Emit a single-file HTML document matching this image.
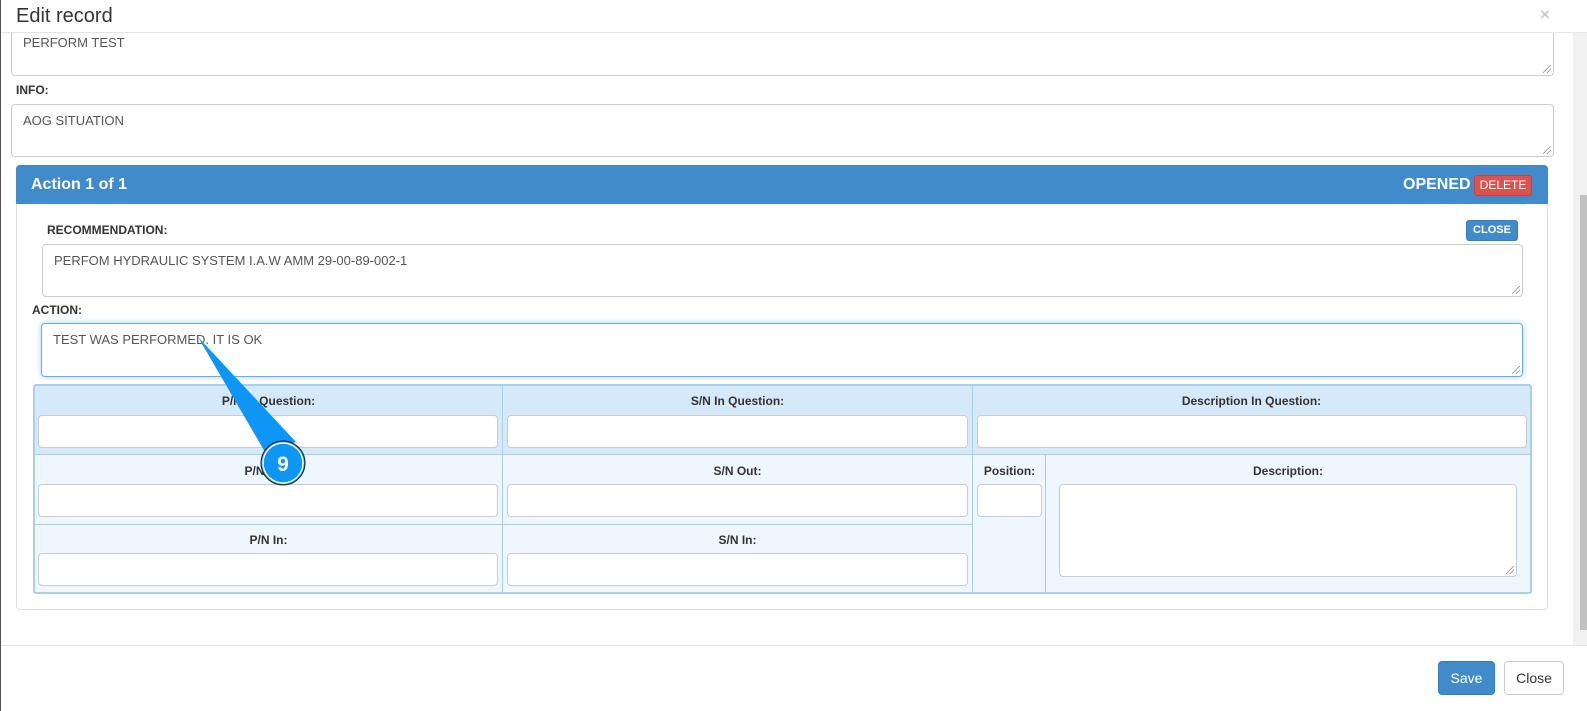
<!DOCTYPE html>
<html><head><meta charset="utf-8"><style>
*{box-sizing:border-box;margin:0;padding:0}
body{width:1587px;height:711px;background:#fff;font-family:"Liberation Sans",Arial,sans-serif;position:relative;overflow:hidden;color:#333}
.a{position:absolute}
.ta{position:absolute;border:1px solid #ccc;border-radius:4px;background:#fff;font-size:13px;color:#555;padding:8px 11px}
.lbl{position:absolute;font-size:12px;font-weight:bold;color:#333}
.in{position:absolute;border:1px solid #ccc;border-radius:4px;background:#fff;height:33px}
.th{position:absolute;font-size:12px;font-weight:bold;color:#333;text-align:center}
.grip{position:absolute;right:2px;bottom:2px;width:8px;height:8px;background:linear-gradient(135deg,transparent 45%,#888 45%,#888 52%,transparent 52%,transparent 70%,#888 70%,#888 77%,transparent 77%)}
</style></head><body>
<div class="a" style="left:0;top:0;width:1px;height:711px;background:#555"></div>
<div class="a" style="left:1573px;top:33px;width:14px;height:612px;background:#f1f1f1"></div>
<div class="a" style="left:1580px;top:195px;width:7px;height:435px;background:#c1c1c1"></div>

<div class="ta" style="left:11px;top:22px;width:1543px;height:54px;padding-top:12px">PERFORM TEST<div class="grip"></div></div>
<div class="a" style="left:1px;top:0;width:1586px;height:33px;background:#fff;border-bottom:1px solid #e5e5e5"></div>
<div class="a" style="left:16px;top:5px;font-size:20px;color:#333">Edit record</div>
<div class="a" style="left:1540px;top:5px;font-size:17px;font-weight:bold;color:#ccc">×</div>

<div class="lbl" style="left:16px;top:83px">INFO:</div>
<div class="ta" style="left:11px;top:104px;width:1543px;height:53px">AOG SITUATION<div class="grip"></div></div>

<div class="a" style="left:16px;top:165px;width:1532px;height:445px;border:1px solid #ddd;border-radius:4px"></div>
<div class="a" style="left:16px;top:165px;width:1532px;height:39px;background:#428bca;border-radius:4px 4px 0 0"></div>
<div class="a" style="left:31px;top:176px;font-size:16px;font-weight:bold;color:#fff">Action 1 of 1</div>
<div class="a" style="left:1403px;top:176px;font-size:16px;font-weight:bold;color:#fff">OPENED</div>
<div class="a" style="left:1474px;top:175px;width:58px;height:21px;background:#d9534f;border:1px solid #d43f3a;border-radius:3px;color:#fff;font-size:12px;text-align:center;line-height:19px">DELETE</div>

<div class="lbl" style="left:47px;top:223px">RECOMMENDATION:</div>
<div class="a" style="left:1466px;top:220px;width:52px;height:21px;background:#428bca;border:1px solid #357ebd;border-radius:3px;color:#fff;font-size:11px;font-weight:bold;text-align:center;line-height:19px">CLOSE</div>
<div class="ta" style="left:42px;top:244px;width:1481px;height:53px">PERFOM HYDRAULIC SYSTEM I.A.W AMM 29-00-89-002-1<div class="grip"></div></div>

<div class="lbl" style="left:32px;top:303px">ACTION:</div>
<div class="ta" style="left:41px;top:323px;width:1482px;height:54px;border-color:#66afe9;box-shadow:0 0 6px rgba(102,175,233,.6)">TEST WAS PERFORMED. IT IS OK<div class="grip"></div></div>

<div class="a" style="left:33px;top:384px;width:1499px;height:210px;border:2px solid #a9cfee;border-radius:3px;background:#eef6fe;overflow:hidden">
 <div class="a" style="left:0;top:0;width:1497px;height:69px;background:#d6e9f8;border-bottom:1px solid #a9cfee"></div>
 <div class="a" style="left:0;top:138px;width:938px;height:1px;background:#a9cfee"></div>
 <div class="a" style="left:467px;top:0;width:1px;height:210px;background:#a9cfee"></div>
 <div class="a" style="left:937px;top:0;width:1px;height:210px;background:#a9cfee"></div>
 <div class="a" style="left:1010px;top:69px;width:1px;height:140px;background:#a9cfee"></div>
</div>
<div class="th" style="left:35px;top:394px;width:467px">P/N In Question:</div>
<div class="th" style="left:503px;top:394px;width:469px">S/N In Question:</div>
<div class="th" style="left:973px;top:394px;width:557px">Description In Question:</div>
<div class="in" style="left:38px;top:415px;width:460px"></div>
<div class="in" style="left:507px;top:415px;width:461px"></div>
<div class="in" style="left:977px;top:415px;width:550px"></div>
<div class="th" style="left:35px;top:464px;width:467px">P/N Out:</div>
<div class="th" style="left:503px;top:464px;width:469px">S/N Out:</div>
<div class="th" style="left:973px;top:464px;width:73px">Position:</div>
<div class="th" style="left:1046px;top:464px;width:484px">Description:</div>
<div class="in" style="left:38px;top:484px;width:460px"></div>
<div class="in" style="left:507px;top:484px;width:461px"></div>
<div class="in" style="left:977px;top:484px;width:65px"></div>
<div class="in" style="left:1059px;top:484px;width:458px;height:93px"><div class="grip"></div></div>
<div class="th" style="left:35px;top:533px;width:467px">P/N In:</div>
<div class="th" style="left:503px;top:533px;width:469px">S/N In:</div>
<div class="in" style="left:38px;top:553px;width:460px"></div>
<div class="in" style="left:507px;top:553px;width:461px"></div>

<div class="a" style="left:1px;top:645px;width:1586px;height:1px;background:#e5e5e5"></div>
<div class="a" style="left:1438px;top:661px;width:57px;height:34px;background:#428bca;border:1px solid #357ebd;border-radius:4px;color:#fff;font-size:14px;text-align:center;line-height:32px">Save</div>
<div class="a" style="left:1504px;top:661px;width:60px;height:34px;background:#fff;border:1px solid #ccc;border-radius:4px;color:#333;font-size:14px;text-align:center;line-height:32px">Close</div>

<svg class="a" style="left:0;top:0" width="1587" height="711">
<polygon points="198,337 265,452 296,442" fill="#0e96f7"/>
<circle cx="283" cy="463" r="22" fill="#0e96f7" stroke="#222" stroke-width="1"/>
<circle cx="283" cy="463" r="20" fill="none" stroke="#fff" stroke-width="1.5"/>
<text x="283" y="471" font-family="Liberation Sans, sans-serif" font-size="21" font-weight="bold" fill="#fff" text-anchor="middle">9</text>
</svg>
</body></html>
